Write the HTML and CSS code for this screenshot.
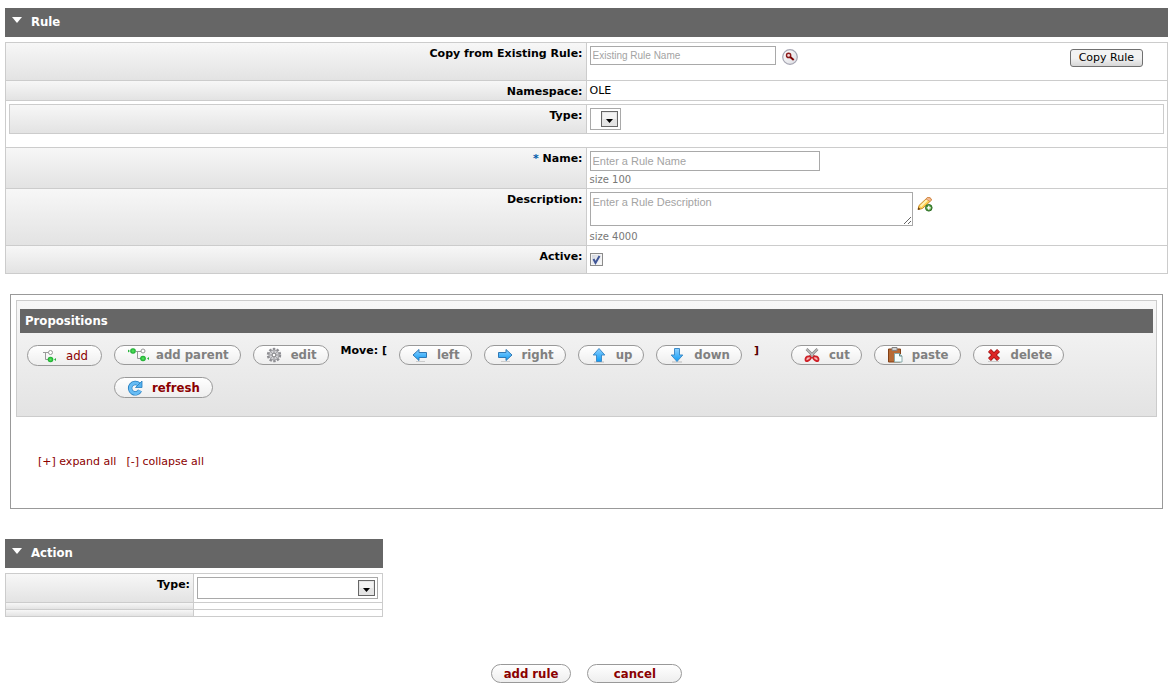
FILE: index.html
```html
<!DOCTYPE html>
<html lang="en">
<head>
<meta charset="utf-8">
<title>Rule</title>
<link rel="stylesheet" href="styles.css">
</head>
<body>
<svg class="defs" aria-hidden="true">
  <defs>
    <linearGradient id="blue" x1="0" y1="0" x2="0" y2="1"><stop offset="0" stop-color="#8fd0ff"/><stop offset="1" stop-color="#0c9cf5"/></linearGradient>
    <linearGradient id="steel" x1="0" y1="0" x2="1" y2="1"><stop offset="0" stop-color="#fff"/><stop offset="1" stop-color="#dcdce2"/></linearGradient>
    <radialGradient id="green"><stop offset="0" stop-color="#5bea62"/><stop offset="1" stop-color="#14a52a"/></radialGradient>
  </defs>
</svg>
<form class="page" onsubmit="return false">
  <section>
    <h2 class="bar"><svg class="caret" viewBox="0 0 10 6"><path d="M0 0h10L5 6z" fill="#fff"/></svg>Rule</h2>
    <div class="sheet">
      <div class="row">
        <label class="label" for="copy">Copy from Existing Rule:</label>
        <div class="field copy-field">
          <input class="text small" id="copy" type="text" placeholder="Existing Rule Name">
          <button class="icon-button lookup" type="button" aria-label="Search">
            <svg width="16" height="16" viewBox="0 0 16 16"><circle cx="8" cy="8" r="7.3" fill="url(#steel)" stroke="#a5a5b2" stroke-width="1.2"/><circle cx="6.600" cy="6.400" r="2.100" fill="#f3dada" stroke="#8b1a1a" stroke-width="1.400"/><path d="M8.200 8l3.500 3" stroke="#7a0000" stroke-width="2"/></svg>
          </button>
          <button class="copy-button" type="button">Copy Rule</button>
        </div>
      </div>
      <div class="row">
        <span class="label">Namespace:</span>
        <div class="field"><span class="value">OLE</span></div>
      </div>
      <div class="nested">
        <div class="sheet">
          <div class="row">
            <label class="label" for="type">Type:</label>
            <div class="field">
              <span class="select"><select id="type" class="narrow"><option></option></select><svg class="arrow" viewBox="0 0 17 16"><rect x=".5" y=".5" width="16" height="15" fill="#e4e4e4" stroke="#666"/><path d="M2 2h13v6H2z" fill="#f3f3f3"/><path d="M5 8h7l-3.500 4z" fill="#000"/></svg></span>
            </div>
          </div>
        </div>
      </div>
      <div class="row">
        <label class="label" for="name"><span class="required">*</span> Name:</label>
        <div class="field">
          <input class="text" id="name" type="text" placeholder="Enter a Rule Name">
          <small class="hint">size 100</small>
        </div>
      </div>
      <div class="row">
        <label class="label" for="description">Description:</label>
        <div class="field">
          <div class="area">
            <textarea id="description" placeholder="Enter a Rule Description"></textarea>
            <button class="icon-button" type="button" aria-label="Expand text">
              <svg width="16" height="16" viewBox="0 0 16 16"><path d="M1 13.500l1-4L10.500 1.500q3.500-.5 4 2.500L5.500 12.500z" fill="#ffd050" stroke="#c88728"/><path d="M3.500 10.500l8-8" stroke="#fff2b5" stroke-width="1.800"/><path d="M10.500 1.500q3.500-.5 4 2.500l-1.500 1.500-4-2.600z" fill="#f6bd96" stroke="#d0854a" stroke-width=".8"/><path d="M.8 13.800l.7-2.500 1.800 1.900z" fill="#553311"/><circle cx="11.800" cy="11.800" r="3.300" fill="#4f9a3c" stroke="#2f6f28"/><path d="M9.800 11.800h4m-2-2v4" stroke="#fff" stroke-width="1.300"/></svg>
            </button>
          </div>
          <small class="hint">size 4000</small>
        </div>
      </div>
      <div class="row">
        <label class="label" for="active">Active:</label>
        <div class="field">
          <span class="check"><input id="active" type="checkbox" checked><svg viewBox="0 0 13 13"><path d="M3.500 6l2 4 4-7" fill="none" stroke="#3f5596" stroke-width="2"/></svg></span>
        </div>
      </div>
    </div>
  </section>

  <section class="tree-panel">
    <div class="toolbox">
      <h3 class="title">Propositions</h3>
      <div class="toolbar">
        <button class="pill plain" type="button"><svg viewBox="0 0 16 16"><path d="M2 4.500h6M4.500 5v6.500h3" fill="none" stroke="#999" stroke-width="1"/><circle cx="9.500" cy="4.500" r="2" fill="#fff" stroke="#999"/><circle cx="9.500" cy="11.500" r="2.800" fill="url(#green)"/><path d="M15 10v3l-2-1.500z" fill="#25b43a"/></svg>add</button>
        <div class="tools">
          <button class="pill muted wide-icon" type="button"><svg viewBox="0 0 22 16"><path d="M9 4.500h5m-3.500 0v7h4" fill="none" stroke="#999" stroke-width="1"/><path d="M1 2.500v3l2-1.500zM22 10v3l-2-1.500z" fill="#25b43a"/><circle cx="6" cy="4" r="2.800" fill="url(#green)"/><circle cx="16" cy="4" r="2" fill="#fff" stroke="#999"/><circle cx="16" cy="11.500" r="2.800" fill="url(#green)"/></svg>add parent</button>
          <button class="pill muted" type="button"><svg viewBox="0 0 16 16"><circle cx="8" cy="8" r="6" fill="none" stroke="#8e8e93" stroke-width="2.400" stroke-dasharray="2.400 1.370"/><circle cx="8" cy="8" r="5" fill="#d2d2d6" stroke="#96969a"/><path d="M8 4v8M4 8h8M5.200 5.200l5.600 5.600m0-5.600l-5.600 5.600" stroke="#98989c" stroke-width=".9"/><circle cx="8" cy="8" r="1.900" fill="#fff" stroke="#808084"/></svg>edit</button>
          <span class="move">Move: [</span>
          <button class="pill muted" type="button"><svg viewBox="0 0 16 16"><path d="M4 14.500h9" stroke="#ccc"/><path d="M1 8l6-5.500v3h7.500v5H7v3z" fill="url(#blue)" stroke="#3078b4"/></svg>left</button>
          <button class="pill muted" type="button"><svg viewBox="0 0 16 16"><path d="M4 14.500h9" stroke="#ccc"/><path d="M15 8L9 2.500v3H1.500v5H9v3z" fill="url(#blue)" stroke="#3078b4"/></svg>right</button>
          <button class="pill muted" type="button"><svg viewBox="0 0 16 16"><path d="M3 15h10" stroke="#bbb"/><path d="M8 1.500L2.200 8H5.500v6.500h5V8h3.300z" fill="url(#blue)" stroke="#3f8cc8"/></svg>up</button>
          <button class="pill muted" type="button"><svg viewBox="0 0 16 16"><path d="M3 15h10" stroke="#bbb"/><path d="M8 14.500L2.200 8H5.500V1.500h5V8h3.300z" fill="url(#blue)" stroke="#3f8cc8"/></svg>down</button>
          <span class="move close">]</span>
          <button class="pill muted" type="button"><svg viewBox="0 0 16 16"><path d="M2.500 2l8 8M13.500 2l-8 8" stroke="#888" stroke-width="2.600"/><path d="M2.500 2l8 8M13.500 2l-8 8" stroke="#ddd" stroke-width="1"/><path d="M7 9.500q-5-1-5.500 2.500-.2 2.500 2 2Q6 13.500 7.500 10M9 9.500q5-1 5.500 2.500.2 2.500-2 2Q10 13.500 8.500 10" fill="#f6b5b5" stroke="#cf2027" stroke-width="1.800"/></svg>cut</button>
          <button class="pill muted" type="button"><svg viewBox="0 0 16 16"><path d="M1.500 2h12v13h-12z" fill="#b66b36" stroke="#824016"/><path d="M5 .500h5v3H5z" fill="#d3d3d3" stroke="#858585"/><path d="M7.500 6.500h5l2.500 2.500v6H7.500z" fill="#f5ffff" stroke="#8aa"/><path d="M12.500 6.500V9H15" fill="#bdd7d7" stroke="#688"/></svg>paste</button>
          <button class="pill muted" type="button"><svg viewBox="0 0 16 16"><path d="M2 14.500h11" stroke="#ccc"/><path d="M3.500 3.500l9 9m0-9l-9 9" stroke="#8f1010" stroke-width="4.200"/><path d="M3.500 3.500l9 9m0-9l-9 9" stroke="#dd2525" stroke-width="2.800"/></svg>delete</button>
          <button class="pill refresh" type="button"><svg viewBox="0 0 16 16"><path d="M12 4.500A5.200 5.200 0 1 0 13 10.500" fill="none" stroke="#277fc0" stroke-width="4.400"/><path d="M12 4.500A5.200 5.200 0 1 0 13 10.500" fill="none" stroke="#67bcf4" stroke-width="3"/><path d="M15 1v6.500H8.500z" fill="#55b2ef" stroke="#277fc0" stroke-width=".8"/></svg>refresh</button>
        </div>
      </div>
    </div>
    <nav class="links"><a href="#">[+] expand all</a><a href="#">[-] collapse all</a></nav>
  </section>

  <section class="action">
    <h2 class="bar"><svg class="caret" viewBox="0 0 10 6"><path d="M0 0h10L5 6z" fill="#fff"/></svg>Action</h2>
    <div class="sheet">
      <div class="row">
        <label class="label" for="action-type">Type:</label>
        <div class="field">
          <span class="select"><select id="action-type"><option></option></select><svg class="arrow" viewBox="0 0 17 16"><rect x=".5" y=".5" width="16" height="15" fill="#e4e4e4" stroke="#666"/><path d="M2 2h13v6H2z" fill="#f3f3f3"/><path d="M5 8h7l-3.500 4z" fill="#000"/></svg></span>
        </div>
      </div>
      <div class="row"><span class="label"></span><div class="field"></div></div>
      <div class="row"><span class="label"></span><div class="field"></div></div>
    </div>
  </section>

  <div class="submit">
    <button class="pill flat" type="submit">add rule</button>
    <button class="pill flat wide" type="button">cancel</button>
  </div>
</form>
</body>
</html>
```

FILE: styles.css
```css
* { box-sizing: border-box; }

body {
  margin: 0;
  background: #fff;
  color: #000;
  font: 11px/13px "DejaVu Sans", sans-serif;
}

button, input, select, textarea { margin: 0; font: inherit; }
svg { display: block; flex: none; }
.defs { position: absolute; width: 0; height: 0; }
.page { padding: 8px 4px 6px 5px; }

.bar {
  display: flex;
  align-items: center;
  gap: 9px;
  height: 29px;
  margin: 0 0 5px;
  padding: 0 7px 2px;
  background: #666;
  color: #fff;
  font: bold 13px/16px "DejaVu Sans Condensed", sans-serif;
}
.caret { width: 10px; height: 6px; margin-bottom: 3px; }

/* Label and value rows */
.sheet { border: 1px solid #ccc; border-top: 0; }
.row {
  display: grid;
  grid-template-columns: 1fr 1fr;
  border-top: 1px solid #ccc;
}
.label {
  padding: 4px 3px 2px;
  border-right: 1px solid #ccc;
  background: linear-gradient(#f7f7f7, #e3e3e3);
  font-weight: bold;
  text-align: right;
}
.required { color: #005bab; }
.field { padding: 3px; }
.value { display: block; }
.nested { padding: 3px 3px 13px; border-top: 1px solid #ccc; }

.text, textarea {
  display: block;
  padding: 0 2px;
  border: 1px solid #a9a9a9;
  border-radius: 0;
  background: #fff;
  font: 11px/13px "Liberation Sans", Arial, sans-serif;
}
.text { width: 230px; height: 20px; }
.small { width: 186px; height: 19px; font-size: 10px; }
::placeholder { color: #a3a3a3; opacity: 1; }
textarea { width: 323px; height: 34px; padding-top: 3px; }
.area { display: flex; align-items: flex-start; gap: 4px; }
.area .icon-button { margin-top: 4px; }
.hint {
  display: block;
  padding-top: 4px;
  color: #777;
  font-size: 10px;
  line-height: 10px;
}
.area + .hint { padding-top: 6px; }

.icon-button { padding: 0; border: 0; background: none; }
.copy-field {
  display: flex;
  align-items: flex-start;
  gap: 6px;
  min-height: 37px;
  padding-right: 24px;
}
.lookup { margin-top: 3px; }
.copy-button {
  height: 18px;
  margin: 3px 0 0 auto;
  padding: 0 8px;
  border: 1px solid #707070;
  border-radius: 3px;
  background: linear-gradient(#f2f2f2 50%, #d6d6d6);
  font-size: 11px;
  line-height: 16px;
}

.select { display: block; position: relative; width: max-content; }
select {
  display: block;
  width: 181px;
  height: 22px;
  border: 1px solid #a9a9a9;
  border-radius: 0;
  background: #fff;
  appearance: none;
}
.narrow { width: 31px; }
.arrow {
  position: absolute;
  top: 3px;
  right: 3px;
  width: 17px;
  height: 16px;
  pointer-events: none;
}

.check { display: block; position: relative; width: 13px; margin: 4px 0; }
.check input {
  display: block;
  width: 13px;
  height: 13px;
  border: 1px solid #8b8b8b;
  background: linear-gradient(135deg, #cfd3dc, #fff);
  box-shadow: inset 0 0 0 1px #f4f4f4;
  appearance: none;
}
.check svg { position: absolute; inset: 0; pointer-events: none; }

/* Proposition tree */
.tree-panel {
  margin: 20px 5px 30px;
  padding: 5px 5px 40px;
  border: 1px solid #999;
}
.toolbox {
  padding: 8px 3px 18px;
  border: 1px solid #ccc;
  background: linear-gradient(#f7f7f7, #e3e3e3);
}
.title {
  margin: 0 0 12px;
  padding: 4px 5px;
  background: #666;
  color: #fff;
  font: bold 13px/16px "DejaVu Sans Condensed", sans-serif;
}
.toolbar { display: flex; align-items: flex-start; gap: 12px; padding: 0 7px; }
.tools { display: flex; flex-wrap: wrap; flex: 1; gap: 12px; }

.pill {
  display: flex;
  align-items: center;
  justify-content: center;
  gap: 9px;
  height: 20px;
  padding: 0 12px;
  border: 1px solid #999;
  border-radius: 11px;
  background: linear-gradient(#fff, #eee);
  color: #8b0000;
  font: bold 13px/16px "DejaVu Sans Condensed", sans-serif;
  white-space: nowrap;
}
.pill svg { width: 16px; height: 16px; }
.plain { height: 21px; padding: 0 13px; font-weight: normal; }
.muted { padding-right: 11px; padding-bottom: 1px; color: #808080; }
.wide-icon { gap: 7px; }
.wide-icon svg { width: 22px; }
.refresh { height: 21px; }
.move { font-weight: bold; line-height: 12px; }
.close { margin-right: 20px; color: #500; }

.links { display: flex; gap: 10px; padding: 38px 22px 0; }
.links a { color: #8b0000; text-decoration: none; }

.action { width: max-content; }
.action .field { padding-right: 4px; }

.submit { display: flex; justify-content: center; gap: 16px; margin-top: 47px; }
.flat { height: 19px; min-width: 80px; }
.wide { min-width: 95px; }
```
